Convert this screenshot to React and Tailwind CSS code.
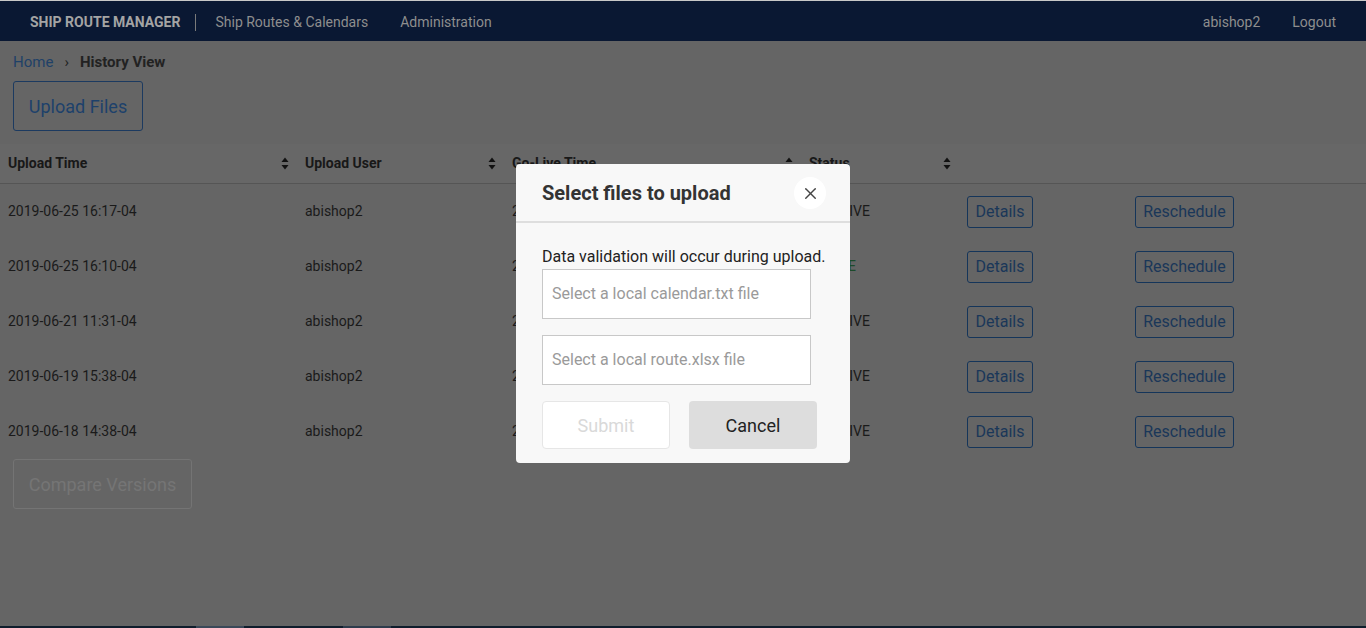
import React from 'react';
import { X } from 'lucide-react';

const rows = [
    { time: '2019-06-25 16:17-04', user: 'abishop2', live: '2019-06-26 00:00-04', status: 'INACTIVE' },
    { time: '2019-06-25 16:10-04', user: 'abishop2', live: '2019-06-25 18:00-04', status: 'ACTIVE' },
    { time: '2019-06-21 11:31-04', user: 'abishop2', live: '2019-06-22 00:00-04', status: 'INACTIVE' },
    { time: '2019-06-19 15:38-04', user: 'abishop2', live: '2019-06-20 00:00-04', status: 'INACTIVE' },
    { time: '2019-06-18 14:38-04', user: 'abishop2', live: '2019-06-19 00:00-04', status: 'INACTIVE' },
];

const SortIcon = ({ upOnly }) => (
    <svg width="8" height="13" viewBox="0 0 8 13" className="shrink-0">
        <path d="M4 0.5 L7.5 5 L0.5 5 Z" fill="#111" />
        {!upOnly && <path d="M4 12.5 L7.5 8 L0.5 8 Z" fill="#111" />}
    </svg>
);

const headers = [
    { label: 'Upload Time' },
    { label: 'Upload User' },
    { label: 'Go-Live Time', upOnly: true },
    { label: 'Status' },
];

const App = () => {
    return (
        <div className="relative h-screen overflow-hidden bg-[#656565] font-['Roboto',sans-serif] flex flex-col">
            {/* Top nav */}
            <header className="h-[41px] shrink-0 border-t border-[#c8c8c8] bg-[#0a1833] flex items-center justify-between pl-[30px] pr-[30px] pt-[2px]">
                <div className="flex items-center">
                    <span className="text-[14px] font-bold text-[#a4a4a4]">SHIP ROUTE MANAGER</span>
                    <span className="mx-[15px] h-[17px] w-px bg-[#7a7a7a]" />
                    <span className="ml-[4px] text-[14px] text-[#8e8e8e]">Ship Routes &amp; Calendars</span>
                    <span className="ml-[32px] text-[14px] text-[#8e8e8e]">Administration</span>
                </div>
                <div className="flex items-center gap-[32px] text-[14px] text-[#8e8e8e]">
                    <span>abishop2</span>
                    <span>Logout</span>
                </div>
            </header>

            <main className="flex-1 flex flex-col">
                {/* Breadcrumb */}
                <div className="px-[13px] pt-[12px] flex items-center text-[15px] leading-[18px]">
                    <span className="text-[#1f4168]">Home</span>
                    <span className="mx-[11px] text-[#222]">›</span>
                    <span className="font-bold text-[#222]">History View</span>
                </div>

                <div className="px-[13px] pt-[10px]">
                    <button className="h-[50px] w-[130px] rounded-[3px] border border-[#1c3a60] text-[18px] text-[#1d416b]">
                        Upload Files
                    </button>
                </div>

                {/* Table */}
                <div className="mt-[13px]">
                    <div className="grid grid-cols-[297px_207px_297px_158px_168px_1fr] h-[40px] bg-[#676767] border-b border-[#555]">
                        {headers.map((h) => (
                            <div key={h.label} className="flex items-center justify-between px-2 text-[14px] font-bold text-[#181818]">
                                <span>{h.label}</span>
                                <SortIcon upOnly={h.upOnly} />
                            </div>
                        ))}
                        <div />
                        <div />
                    </div>
                    {rows.map((r, i) => (
                        <div key={i} className="grid grid-cols-[297px_207px_297px_158px_168px_1fr] h-[55px] items-center text-[14px] text-[#1a1a1a]">
                            <div className="px-2">{r.time}</div>
                            <div className="px-2">{r.user}</div>
                            <div className="px-2">{r.live}</div>
                            <div className={`px-2 ${r.status === 'ACTIVE' ? 'text-[#1c4a2a]' : ''}`}>{r.status}</div>
                            <div className="px-2">
                                <button className="h-[32px] w-[66px] rounded-[3px] border border-[#15355a] text-[16px] text-[#1a3759]">Details</button>
                            </div>
                            <div className="px-2">
                                <button className="h-[32px] w-[99px] rounded-[3px] border border-[#15355a] text-[16px] text-[#1a3759]">Reschedule</button>
                            </div>
                        </div>
                    ))}
                </div>

                <div className="px-[13px] pt-0">
                    <button disabled className="h-[50px] w-[179px] rounded-[3px] border border-[#747474] text-[18px] text-[#757575]">
                        Compare Versions
                    </button>
                </div>
            </main>

            {/* Bottom strip */}
            <div className="h-[2px] shrink-0 bg-[#0f1d2c] flex">
                <div className="w-[196px]" />
                <div className="w-[48px] bg-[#3a4858]" />
                <div className="w-[99px]" />
                <div className="w-[48px] bg-[#2e3c4c]" />
            </div>

            {/* Upload modal */}
            <div className="absolute left-[516px] top-[164px] w-[334px] rounded-[4px] bg-[#f8f8f8]">
                <div className="h-[59px] flex items-center justify-between pl-[26px] pr-[24px] pt-px border-b-2 border-[#dedede]">
                    <h2 className="text-[20px] font-bold text-[#333]">Select files to upload</h2>
                    <button className="h-[32px] w-[32px] rounded-full bg-white flex items-center justify-center text-[#444]">
                        <X size={19} strokeWidth={1.8} />
                    </button>
                </div>
                <div className="pl-[26px] pr-[10px] pt-[23px] pb-[14px]">
                    <p className="whitespace-nowrap text-[16px] leading-[22px] text-[#222]">Data validation will occur during upload.</p>
                    <div className="mt-px h-[50px] w-[269px] border border-[#c8c8c8] bg-white flex items-center px-[9px] text-[16px] text-[#9a9a9a]">
                        Select a local calendar.txt file
                    </div>
                    <div className="mt-[16px] h-[50px] w-[269px] border border-[#c8c8c8] bg-white flex items-center px-[9px] text-[16px] text-[#9a9a9a]">
                        Select a local route.xlsx file
                    </div>
                    <div className="mt-[16px] flex gap-[19px]">
                        <button disabled className="h-[48px] w-[128px] rounded-[4px] border border-[#e6e6e6] bg-white text-[18px] text-[#d9d9d9]">
                            Submit
                        </button>
                        <button className="h-[48px] w-[128px] rounded-[4px] bg-[#dddddd] text-[18px] text-[#222]">
                            Cancel
                        </button>
                    </div>
                </div>
            </div>
        </div>
    );
};

export default App;
